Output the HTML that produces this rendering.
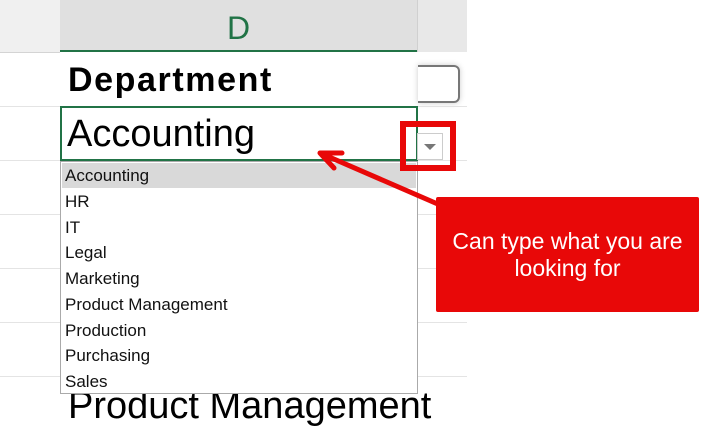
<!DOCTYPE html>
<html><head><style>
body{margin:0;width:701px;height:400px;overflow:hidden;background:#fff;position:relative;font-family:"Liberation Sans",sans-serif}
div{position:absolute;box-sizing:border-box}
.gl{height:1px;background:#e4e4e4;left:0;width:467px}
.it{left:4px;font-size:17px;height:25.8px;line-height:25.8px;color:#111}
</style></head><body>
<div style="left:0;top:0;width:467px;height:52px;background:#e8e8e8"></div>
<div style="left:0;top:0;width:60px;height:52px;background:#f0f0f0"></div>
<div style="left:60px;top:0;width:357px;height:52px;background:#e0e0e0;border-bottom:2px solid #217346"></div>
<div style="left:417px;top:0;width:1px;height:52px;background:#d0d0d0"></div>
<div style="left:60px;top:10px;width:357px;text-align:center;font-size:32px;color:#217346;line-height:36px">D</div>
<div class="gl" style="top:52px;width:60px;background:#d4d4d4"></div>
<div class="gl" style="top:106px"></div>
<div class="gl" style="top:160px"></div>
<div class="gl" style="top:214px"></div>
<div class="gl" style="top:268px"></div>
<div class="gl" style="top:322px"></div>
<div class="gl" style="top:376px"></div>
<div style="left:68px;top:58px;font-size:34px;letter-spacing:1.6px;font-weight:bold;line-height:44px">Department</div>
<div style="left:418px;top:65px;width:42px;height:38px;border:2px solid #777;border-left:none;border-radius:0 6px 6px 0;box-shadow:0 0 6px #ccc"></div>
<div style="left:60px;top:106px;width:358px;height:55px;border:2px solid #217346"></div>
<div style="left:67px;top:111px;font-size:38px;line-height:46px">Accounting</div>
<div style="left:68px;top:383px;font-size:38px;line-height:46px">Product Management</div>
<div style="left:417px;top:133px;width:26px;height:27px;border:1px solid #ccc;background:#fff"></div>
<div style="left:424px;top:144px;width:0;height:0;border-left:6px solid transparent;border-right:6px solid transparent;border-top:6px solid #777"></div>
<div style="left:60px;top:161px;width:358px;height:233px;border:1px solid #aaa;background:#fff">
<div style="left:1px;top:1px;width:354px;height:25px;background:#d9d9d9"></div>
<div class="it" style="top:1px">Accounting</div>
<div class="it" style="top:27px">HR</div>
<div class="it" style="top:53px">IT</div>
<div class="it" style="top:78px">Legal</div>
<div class="it" style="top:104px">Marketing</div>
<div class="it" style="top:130px">Product Management</div>
<div class="it" style="top:156px">Production</div>
<div class="it" style="top:181px">Purchasing</div>
<div class="it" style="top:207px">Sales</div>
</div>
<div style="left:400px;top:121px;width:56px;height:50px;border:6px solid #e80808"></div>
<svg style="position:absolute;left:0;top:0" width="701" height="400"><g stroke="#e80808" stroke-width="5" fill="none" stroke-linecap="round"><path d="M440 205L320 153M320 153L342 153M320 153L334 168"/></g></svg>
<div style="left:436px;top:197px;width:263px;height:115px;background:#e80808;border-radius:2px;color:#fff;font-size:23px;line-height:27px;text-align:center;padding-top:31px">Can type what you are<br>looking for</div>
</body></html>
